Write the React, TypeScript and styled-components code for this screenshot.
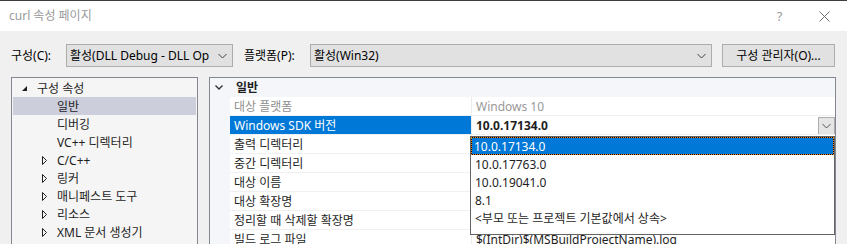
import React from "react";
import styled, { createGlobalStyle } from "styled-components";

const FONT = `"Noto Sans", "Noto Sans CJK KR", sans-serif`;

const Global = createGlobalStyle`
  html, body { margin: 0; padding: 0; background: #f0f0f0; }
  body { font-family: ${FONT}; font-size: 12px; color: #000; }
  * { box-sizing: border-box; }
`;

const Window = styled.div`
  width: 847px;
  height: 244px;
  overflow: hidden;
  display: flex;
  flex-direction: column;
  background: #f0f0f0;
`;

const TitleBar = styled.div`
  height: 31px;
  flex: none;
  background: #fff;
  border-top: 1px solid #3c3c3c;
  display: flex;
  align-items: center;
  padding-left: 9px;
`;

const Title = styled.div`
  flex: 1;
  color: #9a9a9a;
  font-size: 12px;
  line-height: 16px;
`;

const TitleButton = styled.div`
  width: 45px;
  height: 30px;
  display: flex;
  align-items: center;
  justify-content: center;
  color: #9a9a9a;
  font-size: 13px;
`;

const Body = styled.div`
  display: flex;
  flex-direction: column;
  padding: 13px 11px 0 11px;
  gap: 10px;
`;

const TopRow = styled.div`
  display: flex;
  align-items: center;
  height: 23px;
`;

const Label = styled.div<{ $w: number; $ml?: number }>`
  width: ${(p) => p.$w}px;
  margin-left: ${(p) => p.$ml ?? 0}px;
  line-height: 16px;
  white-space: nowrap;
`;

const Combo = styled.div<{ $w: number }>`
  width: ${(p) => p.$w}px;
  height: 23px;
  background: #e1e1e1;
  border: 1px solid #adadad;
  display: flex;
  align-items: center;
  padding: 0 5px 0 3px;
  gap: 4px;
`;

const ComboText = styled.div`
  flex: 1;
  overflow: hidden;
  white-space: nowrap;
  line-height: 16px;
`;

const Button = styled.div`
  width: 113px;
  height: 23px;
  margin-left: 10px;
  background: #e1e1e1;
  border: 1px solid #adadad;
  display: flex;
  align-items: center;
  justify-content: center;
  line-height: 16px;
  white-space: nowrap;
`;

const Main = styled.div`
  display: flex;
  gap: 11px;
  height: 220px;
`;

const Tree = styled.div`
  width: 187px;
  flex: none;
  background: #f5f5f5;
  border: 1px solid #828790;
  padding: 1px;
`;

const TreeRow = styled.div<{ $indent: number; $selected?: boolean }>`
  height: 18px;
  display: flex;
  align-items: center;
  padding-left: ${(p) => p.$indent}px;
  padding-top: 2px;
  background: ${(p) => (p.$selected ? "#cccedb" : "transparent")};
  color: #1e1e1e;
  white-space: nowrap;
  line-height: 16px;
`;

const Expander = styled.svg`
  width: 16px;
  height: 18px;
  flex: none;
  margin-top: -2px;
`;

const GridPanel = styled.div`
  flex: 1;
  position: relative;
  background: #fff;
  border: 1px solid #828790;
`;

const CategoryRow = styled.div`
  height: 19px;
  background: #f4f6f9;
  display: flex;
  align-items: center;
  font-weight: bold;
  line-height: 16px;
  padding-top: 1px;
  color: #1e1e1e;
`;

const CatToggle = styled.svg`
  width: 26px;
  height: 19px;
  flex: none;
  margin-top: -1px;
`;

const PropRow = styled.div`
  display: grid;
  grid-template-columns: 20px 242px 1fr;
  height: 19px;
`;

const Gutter = styled.div`
  background: #f4f6f9;
`;

const NameCell = styled.div<{ $selected?: boolean; $disabled?: boolean }>`
  background: ${(p) => (p.$selected ? "#0078d7" : "#fff")};
  color: ${(p) => (p.$selected ? "#fff" : p.$disabled ? "#8f8f8f" : "#1e1e1e")};
  border-bottom: 1px solid #f0f0f0;
  border-right: 1px solid #ececec;
  padding-left: 4px;
  padding-top: 1px;
  display: flex;
  align-items: center;
  white-space: nowrap;
  overflow: hidden;
  line-height: 16px;
`;

const ValueCell = styled.div<{ $bold?: boolean; $disabled?: boolean }>`
  border-bottom: 1px solid #f0f0f0;
  padding-left: 4px;
  display: flex;
  align-items: center;
  justify-content: space-between;
  white-space: nowrap;
  overflow: hidden;
  line-height: 16px;
  font-weight: ${(p) => (p.$bold ? "bold" : "normal")};
  color: ${(p) => (p.$disabled ? "#999" : "#1e1e1e")};
`;

const ValueText = styled.span`
  padding-top: 1px;
`;

const DropButton = styled.div`
  width: 17px;
  height: 18px;
  margin-top: 1px;
  align-self: flex-start;
  background: #e5e5e5;
  border: 1px solid #adadad;
  display: flex;
  align-items: center;
  justify-content: center;
`;

const DropList = styled.div`
  position: absolute;
  left: 260px;
  top: 58px;
  width: 365px;
  height: 99px;
  background: #fff;
  border: 1px solid #646464;
`;

const DropItem = styled.div<{ $selected?: boolean }>`
  height: 18px;
  padding-left: 3px;
  padding-top: 1px;
  display: flex;
  align-items: center;
  line-height: 16px;
  white-space: nowrap;
  color: ${(p) => (p.$selected ? "#fff" : "#1e1e1e")};
  border: 1px solid transparent;
  ${(p) =>
    p.$selected
      ? `border: 1px dotted #f08a1c;
         padding-left: 2px;
         background: linear-gradient(#0078d7, #0078d7) padding-box, #000 border-box;`
      : ""}
`;

const Chevron: React.FC<{ color?: string }> = ({ color = "#404040" }) => (
  <svg width="9" height="6" viewBox="0 0 9 6">
    <polyline points="0.5,1 4.5,5 8.5,1" fill="none" stroke={color} strokeWidth="1" />
  </svg>
);

const Collapsed = () => (
  <Expander viewBox="0 0 16 18">
    <polygon points="1.5,5.5 1.5,13.5 5.5,9.5" fill="none" stroke="#1e1e1e" strokeWidth="1" />
  </Expander>
);

const Expanded = () => (
  <Expander viewBox="0 0 16 18">
    <polygon points="6,7 6,12 1,12" fill="#1e1e1e" />
  </Expander>
);

const Blank = () => <Expander viewBox="0 0 16 18" />;

const treeItems: { label: string; children?: boolean; selected?: boolean }[] = [
  { label: "일반", selected: true },
  { label: "디버깅" },
  { label: "VC++ 디렉터리" },
  { label: "C/C++", children: true },
  { label: "링커", children: true },
  { label: "매니페스트 도구", children: true },
  { label: "리소스", children: true },
  { label: "XML 문서 생성기", children: true },
];

const props: { name: string; value: string; disabled?: boolean; selected?: boolean }[] = [
  { name: "대상 플랫폼", value: "Windows 10", disabled: true },
  { name: "Windows SDK 버전", value: "10.0.17134.0", selected: true },
  { name: "출력 디렉터리", value: "" },
  { name: "중간 디렉터리", value: "" },
  { name: "대상 이름", value: "" },
  { name: "대상 확장명", value: "" },
  { name: "정리할 때 삭제할 확장명", value: "" },
  { name: "빌드 로그 파일", value: "$(IntDir)$(MSBuildProjectName).log" },
];

const options = ["10.0.17134.0", "10.0.17763.0", "10.0.19041.0", "8.1", "<부모 또는 프로젝트 기본값에서 상속>"];

export default function App() {
  return (
    <Window>
      <Global />
      <TitleBar>
        <Title>curl 속성 페이지</Title>
        <TitleButton>?</TitleButton>
        <TitleButton>
          <svg width="11" height="11" viewBox="0 0 11 11">
            <path d="M0.5 0.5 L10.5 10.5 M10.5 0.5 L0.5 10.5" stroke="#707070" strokeWidth="1" />
          </svg>
        </TitleButton>
      </TitleBar>
      <Body>
        <TopRow>
          <Label $w={55}>구성(C):</Label>
          <Combo $w={167}>
            <ComboText>활성(DLL Debug - DLL Op</ComboText>
            <Chevron />
          </Combo>
          <Label $w={66} $ml={11}>플랫폼(P):</Label>
          <Combo $w={402}>
            <ComboText>활성(Win32)</ComboText>
            <Chevron />
          </Combo>
          <Button>구성 관리자(O)...</Button>
        </TopRow>
        <Main>
          <Tree>
            <TreeRow $indent={8}>
              <Expanded />
              구성 속성
            </TreeRow>
            {treeItems.map((t) => (
              <TreeRow key={t.label} $indent={28} $selected={t.selected}>
                {t.children ? <Collapsed /> : <Blank />}
                {t.label}
              </TreeRow>
            ))}
          </Tree>
          <GridPanel>
            <CategoryRow>
              <CatToggle viewBox="0 0 26 19">
                <polyline points="5.5,7.5 9,11 12.5,7.5" fill="none" stroke="#333" strokeWidth="1.4" />
              </CatToggle>
              일반
            </CategoryRow>
            {props.map((p) => (
              <PropRow key={p.name}>
                <Gutter />
                <NameCell $selected={p.selected} $disabled={p.disabled}>
                  {p.name}
                </NameCell>
                <ValueCell $bold={p.selected} $disabled={p.disabled}>
                  <ValueText>{p.value}</ValueText>
                  {p.selected && (
                    <DropButton>
                      <Chevron color="#555" />
                    </DropButton>
                  )}
                </ValueCell>
              </PropRow>
            ))}
            <DropList>
              {options.map((o, i) => (
                <DropItem key={o} $selected={i === 0}>
                  {o}
                </DropItem>
              ))}
            </DropList>
          </GridPanel>
        </Main>
      </Body>
    </Window>
  );
}
